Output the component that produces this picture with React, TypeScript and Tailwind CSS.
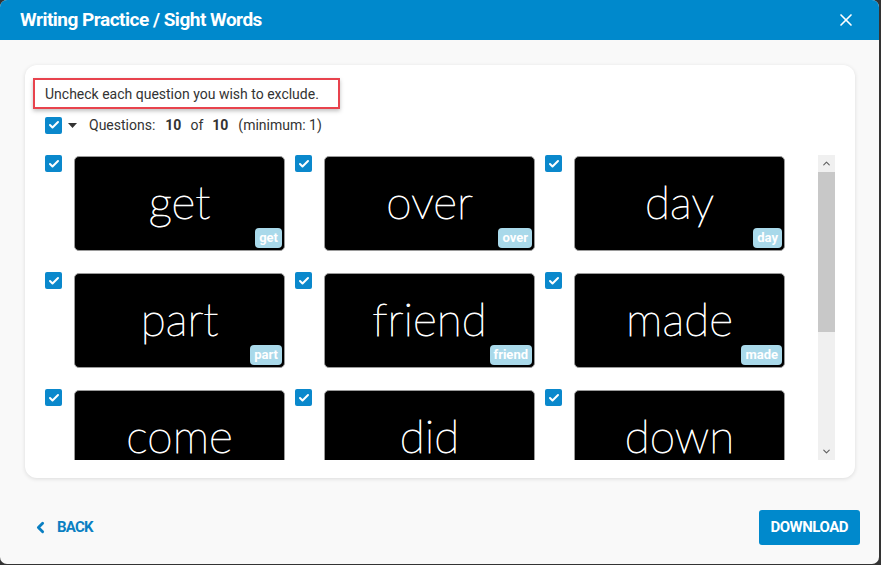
import { Check, ChevronLeft, ChevronUp, ChevronDown, X } from "lucide-react";

const words = ["get", "over", "day", "part", "friend", "made", "come", "did", "down", "the"];

const CheckBox = () => (
  <div className="w-[17px] h-[17px] shrink-0 rounded-[2px] bg-[#0a88cc] flex items-center justify-center">
    <Check size={12} strokeWidth={4} className="text-white" />
  </div>
);

const WordCard = ({ word }: { word: string }) => (
  <div className="flex items-start gap-[12px] w-[250px]">
    <CheckBox />
    <div className="relative mt-[1px] w-[211px] h-[95px] rounded-[5px] bg-black border border-[#9a9a9a] flex items-center justify-center">
      <span className="text-white text-[46px] font-thin leading-none -mt-[4px] font-['Lato',sans-serif] [-webkit-text-stroke:0.9px_white]">
        {word}
      </span>
      <span className="absolute right-[2px] bottom-[2px] h-[20px] px-[4px] rounded-[4px] bg-[#a9d9ea] text-white text-[13px] font-bold leading-[20px] font-['Roboto',sans-serif]">
        {word}
      </span>
    </div>
  </div>
);

export default function App() {
  return (
    <div className="w-[881px] h-[565px] bg-[#333333] font-['Roboto',sans-serif]">
      <div className="w-[879px] h-[564px] rounded-[7px] overflow-hidden bg-[#f9f9f9] flex flex-col">
        <div className="h-[40px] shrink-0 bg-[#0089cc] flex items-center justify-between pl-[20px] pr-[23px]">
          <h1 className="text-white text-[19px] font-bold tracking-[-0.5px]">
            Writing Practice / Sight Words
          </h1>
          <X size={20} strokeWidth={2} className="text-white" />
        </div>

        <div className="pt-[25px] pl-[25px] pr-[24px]">
          <div className="h-[413px] bg-white rounded-[12px] shadow-[0_1px_4px_rgba(0,0,0,0.12)] pt-[13px] pl-[8px]">
            <div className="w-[307px] h-[31px] border-2 border-[#e8434d] shadow-[0_2px_4px_rgba(0,0,0,0.25)] flex items-center pl-[10px] pt-[2px] text-[14px] text-[#333]">
              Uncheck each question you wish to exclude.
            </div>

            <div className="flex items-center mt-[7px] ml-[12px] h-[18px] text-[14px] text-[#333]">
              <CheckBox />
              <svg width="9" height="5" viewBox="0 0 9 5" className="ml-[6px]">
                <path d="M0 0h9L4.5 5z" fill="#333" />
              </svg>
              <span className="ml-[12px]">Questions:</span>
              <span className="ml-[10px] font-bold">10</span>
              <span className="ml-[9px]">of</span>
              <span className="ml-[9px] font-bold">10</span>
              <span className="ml-[10px]">(minimum: 1)</span>
            </div>

            <div className="flex mt-[21px] ml-[12px]">
              <div className="h-[305px] w-[773px] overflow-hidden">
                <div className="grid grid-cols-[250px_250px_250px] gap-y-[21px]">
                  {words.map((w) => (
                    <WordCard key={w} word={w} />
                  ))}
                </div>
              </div>
              <div className="w-[17px] h-[305px] bg-[#f0f0f0] flex flex-col">
                <div className="h-[17px] flex items-center justify-center">
                  <ChevronUp size={11} strokeWidth={2.5} className="text-[#606060]" />
                </div>
                <div className="h-[160px] bg-[#c8c8c8]" />
                <div className="flex-1" />
                <div className="h-[17px] flex items-center justify-center">
                  <ChevronDown size={11} strokeWidth={2.5} className="text-[#606060]" />
                </div>
              </div>
            </div>
          </div>
        </div>

        <div className="flex items-center justify-between pl-[32px] pr-[19px] mt-[32px]">
          <button className="flex items-center gap-[8px] text-[#0a7fc2] text-[15px] font-bold tracking-[-0.8px]">
            <ChevronLeft size={17} strokeWidth={4} />
            BACK
          </button>
          <button className="h-[35px] px-[12px] rounded-[3px] bg-[#0089cc] text-white text-[15px] font-bold tracking-[-0.5px]">
            DOWNLOAD
          </button>
        </div>
      </div>
    </div>
  );
}
